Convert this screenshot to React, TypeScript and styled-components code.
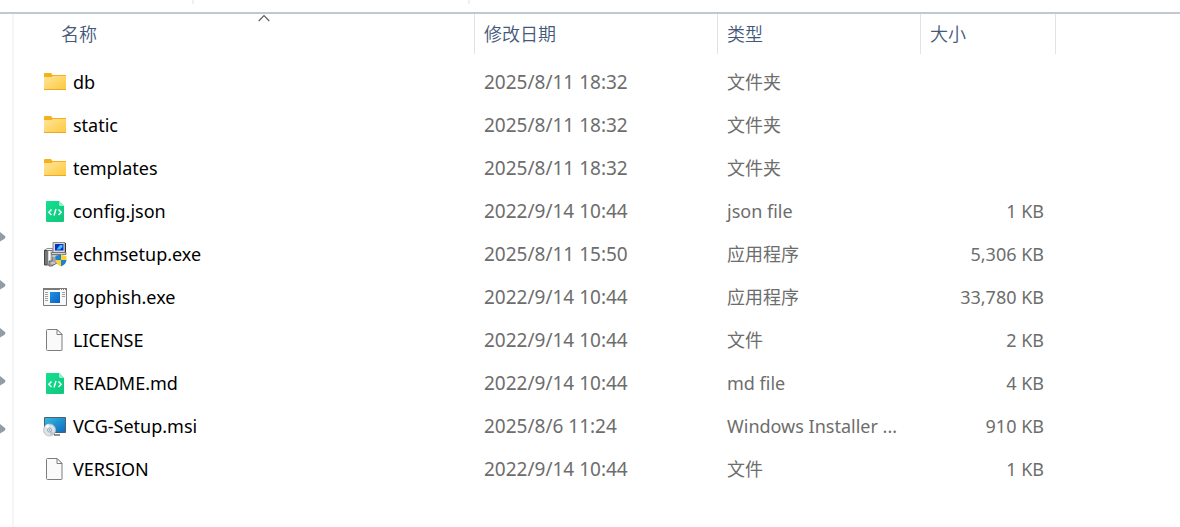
import React from "react";
import styled, { createGlobalStyle } from "styled-components";

const GlobalStyle = createGlobalStyle`
  * { box-sizing: border-box; }
  body {
    margin: 0;
    background: #fff;
    font-family: "Noto Sans", "Noto Sans CJK SC", sans-serif;
  }
`;

const Window = styled.div`
  display: flex;
  flex-direction: column;
  min-height: 100vh;
  overflow-x: hidden;
`;

const Toolbar = styled.div`
  display: flex;
  height: 14px;
  border-bottom: 2px solid #c3c8cf;
`;

const ToolbarSection = styled.div<{ $width: number }>`
  width: ${(p) => p.$width}px;
  height: 4px;
  border-right: 2px solid #f0f0f0;
`;

const Body = styled.div`
  display: flex;
  flex: 1;
`;

const Sidebar = styled.aside`
  flex: none;
  width: 14px;
  border-right: 2px solid #f5f5f5;
  padding-top: 199px;
`;

const PinItem = styled.div`
  display: flex;
  align-items: center;
  height: 48px;
`;

const FilePane = styled.main`
  flex: 1;
  min-width: 0;
`;

const FileTable = styled.table`
  table-layout: fixed;
  width: 1042px;
  border-collapse: separate;
  border-spacing: 0;
`;

const Col = styled.col<{ $width: number }>`
  width: ${(p) => p.$width}px;
`;

const HeadCell = styled.th`
  padding: 0 0 7px;
  font-weight: 400;
  text-align: left;
`;

const HeadButton = styled.button<{ $inset?: boolean }>`
  position: relative;
  display: flex;
  align-items: center;
  width: ${(p) => (p.$inset ? "calc(100% - 39px)" : "100%")};
  height: 40px;
  margin: 0 0 0 ${(p) => (p.$inset ? 39 : 0)}px;
  padding: 0 8px 2px ${(p) => (p.$inset ? 8 : 9)}px;
  border: 0;
  border-right: 1px solid #e2e3e5;
  background: none;
  color: #44597a;
  font-family: "Noto Sans CJK SC", sans-serif;
  font-size: 18px;
  font-weight: 350;
  line-height: 24px;
`;

const SortMark = styled.svg`
  position: absolute;
  top: 0;
  left: calc(50% - 6px);
`;

const Cell = styled.td<{ $right?: boolean }>`
  height: 43px;
  padding: 0 ${(p) => (p.$right ? 12 : 9)}px 2px 9px;
  color: #6d6d6d;
  font-size: 18px;
  line-height: 24px;
  text-align: ${(p) => (p.$right ? "right" : "left")};
  white-space: nowrap;
`;

const DateCell = styled(Cell)`
  font-size: 19px;
`;

const NameCell = styled(Cell)`
  padding: 0 0 0 29px;
  color: #000;
`;

const FileName = styled.div`
  display: flex;
  align-items: center;
  gap: 6px;
`;

const FileLabel = styled.span`
  padding-bottom: 2px;
`;

const Icon = styled.svg.attrs({ width: 24, height: 25, viewBox: "0 0 24 25", "aria-hidden": true })`
  flex: none;
  display: block;
`;

const FolderIcon = () => (
  <Icon>
    <defs>
      <linearGradient id="folder" x1="0" y1="0" x2="1" y2="1">
        <stop offset="0" stopColor="#ffe59b" />
        <stop offset="1" stopColor="#fdc93c" />
      </linearGradient>
    </defs>
    <path d="M1 4q0-1 1-1h6l1.500 2H23v4H1z" fill="#f5b01c" />
    <path d="M1 7h7.500l1.500-1H23v13q0 1-1 1H2q-1 0-1-1z" fill="url(#folder)" />
    <path d="M1 19.500h22" stroke="#eba82b" />
  </Icon>
);

const CodeIcon = () => (
  <Icon>
    <defs>
      <linearGradient id="code" x1="0" y1="0" x2="1" y2="1">
        <stop offset="0" stopColor="#14e08f" />
        <stop offset="1" stopColor="#0fc67c" />
      </linearGradient>
    </defs>
    <path d="M3 3q0-1 1-1h12l5 5v15q0 1-1 1H4q-1 0-1-1z" fill="url(#code)" />
    <path d="M16 2l5 5h-4q-1 0-1-1z" fill="#93f0cb" />
    <path d="M8.500 10.500L5.800 13.200l2.700 2.700M15.500 10.500l2.700 2.700-2.700 2.700M13 10l-2 6.500" fill="none" stroke="#fff" strokeWidth="1.400" />
  </Icon>
);

const SetupIcon = () => (
  <Icon>
    <path d="M1 8.500l3-2h7l-2 2z" fill="#f2f2f2" stroke="#777" strokeWidth=".8" />
    <path d="M1.500 8.500h3v14.500h-3z" fill="#777" stroke="#444" />
    <path d="M4.500 8.500H10V23H4.500z" fill="#d8d8d8" stroke="#777" />
    <path d="M6.500 9V22" stroke="#fff" />
    <path d="M9 11l7 1-2 9-5 3H6v-5h3z" fill="#a4a4a4" stroke="#555" strokeWidth=".8" />
    <path d="M9 14h4M8 21h4" stroke="#e8e8e8" />
    <path d="M10 .5h12v10H10z" fill="#d9d9d9" stroke="#888" />
    <path d="M22.500 1v10" stroke="#333" />
    <path d="M12 2h8.500v6.500H12z" fill="#0a2fc4" />
    <path d="M13.500 7.500l3.500-4.500h2.500v2L17 7.500z" fill="#39c4ff" />
    <path d="M8.500 10.500h14.500v2H8.500z" fill="#d2d2d2" stroke="#666" strokeWidth=".8" />
    <path d="M18 12q-2.500 2-5.500 2v4H18z" fill="#1b83d4" />
    <path d="M18 12q2.500 2 5.500 2v4H18z" fill="#ffd12c" />
    <path d="M12.500 18H18v6.500q-5-2-5.500-6.500z" fill="#ffd12c" />
    <path d="M18 18h5.500q-.5 4.500-5.500 6.500z" fill="#1b83d4" />
  </Icon>
);

const ProgramIcon = () => (
  <Icon>
    <defs>
      <linearGradient id="program" x1="0" y1="0" x2="1" y2="1">
        <stop offset="0" stopColor="#1c93e8" />
        <stop offset="1" stopColor="#0c62bd" />
      </linearGradient>
    </defs>
    <path d="M.5 3.500h23v17H.5z" fill="#f8f8f8" stroke="#7b7b7b" />
    <path d="M0 4h24" stroke="#7b7b7b" strokeWidth="2" />
    <path d="M17 4.500h1M19 4.500h1M21 4.500h1" stroke="#fff" />
    <path d="M2 7.500h3M2 9.500h3M2 11.500h3M2 13.500h3M2 15.500h3M19 7.500h3M19 9.500h3M19 11.500h3" stroke="#a0a0a0" />
    <path d="M7 7h10v11H7z" fill="url(#program)" />
  </Icon>
);

const BlankIcon = () => (
  <Icon>
    <path d="M4.500 1.500H14l5 5v15.500q0 .5-.5.500h-14q-1 0-1-1v-19q0-1 1-1z" fill="#fafafa" stroke="#7d7d7d" />
    <path d="M14 1.500v5h5z" fill="#fff" stroke="#7d7d7d" />
  </Icon>
);

const InstallerIcon = () => (
  <Icon>
    <defs>
      <linearGradient id="screen" x1="0" y1="0" x2="1" y2="1">
        <stop offset="0" stopColor="#35bde0" />
        <stop offset="1" stopColor="#0c69bd" />
      </linearGradient>
    </defs>
    <path d="M1.500 3.500h21v15h-21z" fill="url(#screen)" stroke="#4a6272" />
    <path d="M11 19v2M11 21h6" stroke="#69737b" strokeWidth="1.500" />
    <circle cx="6.500" cy="16" r="6" fill="#dfe3e7" stroke="#b6bdc4" strokeWidth=".8" />
    <path d="M6.500 16L2 12A6 6 0 0 1 5.500 10z" fill="#fbfbfb" />
    <path d="M6.500 16l5 3A6 6 0 0 1 7.500 21.800z" fill="#c2c8cf" />
    <circle cx="6.500" cy="16" r="2" fill="#fff" stroke="#98a5b0" />
    <circle cx="6.500" cy="16" r=".8" fill="#3c87b8" />
  </Icon>
);

const icons = {
  folder: FolderIcon,
  code: CodeIcon,
  setup: SetupIcon,
  program: ProgramIcon,
  blank: BlankIcon,
  installer: InstallerIcon,
};

type FileEntry = { icon: keyof typeof icons; name: string; date: string; type: string; size: string };

const files: FileEntry[] = [
  { icon: "folder", name: "db", date: "2025/8/11 18:32", type: "文件夹", size: "" },
  { icon: "folder", name: "static", date: "2025/8/11 18:32", type: "文件夹", size: "" },
  { icon: "folder", name: "templates", date: "2025/8/11 18:32", type: "文件夹", size: "" },
  { icon: "code", name: "config.json", date: "2022/9/14 10:44", type: "json file", size: "1 KB" },
  { icon: "setup", name: "echmsetup.exe", date: "2025/8/11 15:50", type: "应用程序", size: "5,306 KB" },
  { icon: "program", name: "gophish.exe", date: "2022/9/14 10:44", type: "应用程序", size: "33,780 KB" },
  { icon: "blank", name: "LICENSE", date: "2022/9/14 10:44", type: "文件", size: "2 KB" },
  { icon: "code", name: "README.md", date: "2022/9/14 10:44", type: "md file", size: "4 KB" },
  { icon: "installer", name: "VCG-Setup.msi", date: "2025/8/6 11:24", type: "Windows Installer ...", size: "910 KB" },
  { icon: "blank", name: "VERSION", date: "2022/9/14 10:44", type: "文件", size: "1 KB" },
];

const pins = [1, 2, 3, 4, 5];

export default function App() {
  return (
    <Window>
      <GlobalStyle />
      <Toolbar>
        <ToolbarSection $width={194} />
        <ToolbarSection $width={276} />
      </Toolbar>
      <Body>
        <Sidebar>
          {pins.map((pin) => (
            <PinItem key={pin}>
              <svg width="6" height="10" viewBox="0 0 6 10" aria-hidden="true">
                <path d="M0 0l5.500 4.500L5 6.500 0 9.500z" fill="#929ca5" />
              </svg>
            </PinItem>
          ))}
        </Sidebar>
        <FilePane>
          <FileTable>
            <colgroup>
              <Col $width={461} />
              <Col $width={243} />
              <Col $width={203} />
              <Col $width={135} />
            </colgroup>
            <thead>
              <tr>
                <HeadCell scope="col" aria-sort="ascending">
                  <HeadButton type="button" $inset>
                    名称
                    <SortMark width="12" height="8" viewBox="0 0 12 8" aria-hidden="true">
                      <path d="M.7 7L6 1.700 11.300 7" fill="none" stroke="#5c5c5c" strokeWidth="1.200" />
                    </SortMark>
                  </HeadButton>
                </HeadCell>
                <HeadCell scope="col"><HeadButton type="button">修改日期</HeadButton></HeadCell>
                <HeadCell scope="col"><HeadButton type="button">类型</HeadButton></HeadCell>
                <HeadCell scope="col"><HeadButton type="button">大小</HeadButton></HeadCell>
              </tr>
            </thead>
            <tbody>
              {files.map((file) => {
                const FileIcon = icons[file.icon];
                return (
                  <tr key={file.name}>
                    <NameCell>
                      <FileName>
                        <FileIcon />
                        <FileLabel>{file.name}</FileLabel>
                      </FileName>
                    </NameCell>
                    <DateCell>{file.date}</DateCell>
                    <Cell>{file.type}</Cell>
                    <Cell $right>{file.size}</Cell>
                  </tr>
                );
              })}
            </tbody>
          </FileTable>
        </FilePane>
      </Body>
    </Window>
  );
}
